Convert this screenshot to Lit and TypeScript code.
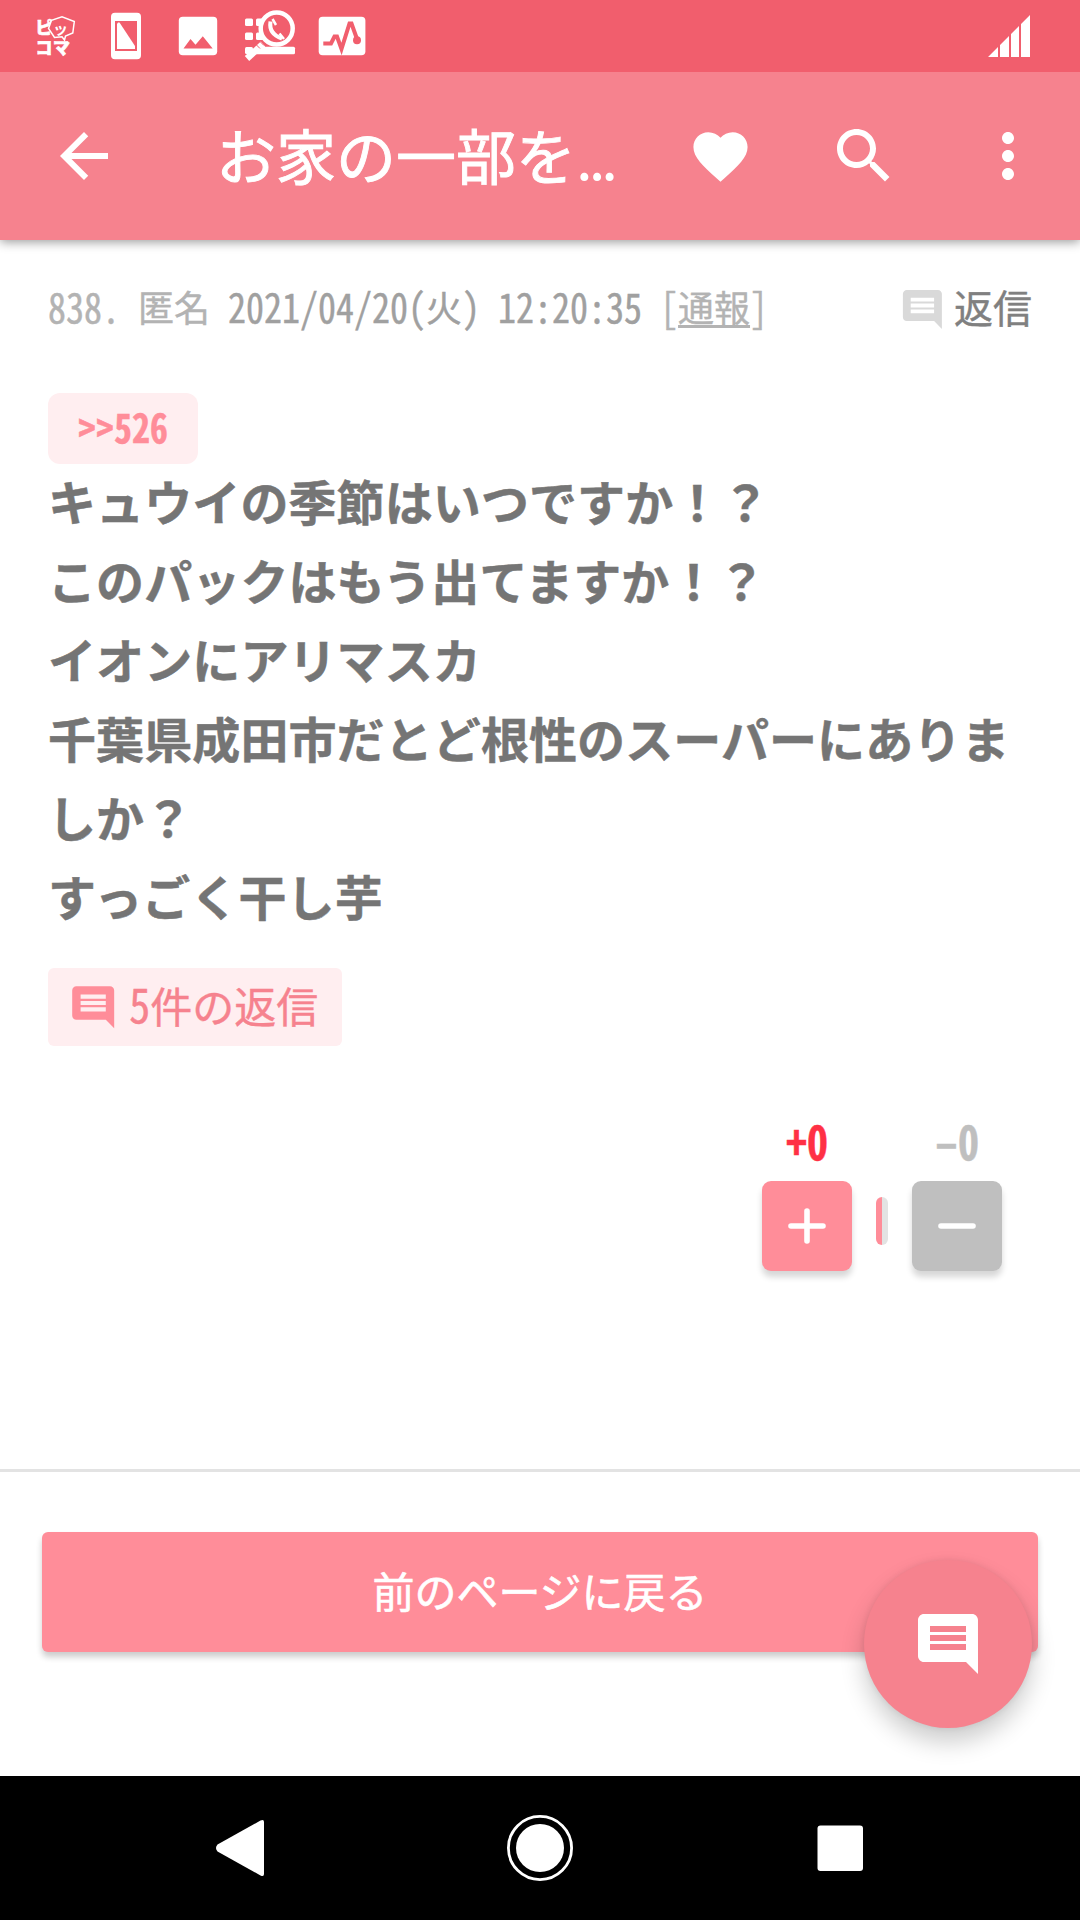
import { LitElement, html, css, svg } from "lit";
import { customElement } from "lit/decorators.js";

const commentPath =
  "M21.99 4c0-1.1-.89-2-1.99-2H4c-1.1 0-2 .9-2 2v12c0 1.1.9 2 2 2h14l4 4-.01-18zM18 14H6v-2h12v2zm0-3H6V9h12v2zm0-3H6V6h12v2z";
const icon = (path: string, cls: string) =>
  html`<svg class="icon ${cls}" viewBox="0 0 24 24"><path d=${path}></path></svg>`;

const statusIcons = [
  svg`<g font-family="Noto Sans CJK JP" font-weight="900" fill="#fff" stroke="#fff" stroke-width=".6">
      <text x="35.500" y="34" font-size="17">ピ</text>
      <text x="35.500" y="53.500" font-size="17">コ</text>
      <text x="53" y="53.500" font-size="17">マ</text>
    </g>
    <path d="M48.5 28.5 51.5 20.3 62 16.7 74.3 21.5 72.8 33 65.5 36 64.5 40 62 36.8 54.5 37.5z" fill="#f15e6d" stroke="#fff" stroke-width="1.5"/>
    <text x="53" y="33.500" font-size="15" font-weight="700" font-family="Noto Sans CJK JP" fill="#fff">ッ</text>`,
  svg`<path fill="#fff" fill-rule="evenodd" d="M115 12.7h22a4 4 0 0 1 4 4v38.600a4 4 0 0 1-4 4h-22a4 4 0 0 1-4-4v-38.600a4 4 0 0 1 4-4zM115 21v30h22V21z"/>
    <path fill="#fff" d="M117 49V24l1-1.500h1.500L135 46v3z"/>`,
  svg`<rect x="178.800" y="16.800" width="38.400" height="38.400" rx="4" fill="#fff"/>
    <path fill="#f15e6d" d="M183.500 48.500 190.500 39 195.500 44.800 202.800 36.300 212.700 48.500z"/>`,
  svg`<g fill="#fff"><rect x="245" y="18.500" width="8" height="7.500" rx="1.500"/><rect x="245" y="32.500" width="8" height="7.500" rx="1.500"/><rect x="245" y="47" width="8" height="7" rx="1.500"/>
      <rect x="256" y="18.500" width="10" height="7.500" rx="1.500"/><rect x="256" y="32.500" width="10" height="7.500" rx="1.500"/><rect x="255" y="46.800" width="40" height="7.400" rx="1.500"/></g>
    <circle cx="276.700" cy="28.500" r="16" fill="#f15e6d" stroke="#fff" stroke-width="4.500"/>
    <path d="M263 44 247 58.500" stroke="#fff" stroke-width="6.500"/>
    <path d="M256 44.500l4 4M260 41.500l4 4" stroke="#f15e6d" stroke-width="1"/>
    <path d="M270.500 21.500Q268.500 34 282 38.500" fill="none" stroke="#fff" stroke-width="4"/>
    <path d="M272.500 19 276 25M279.500 33.500 284 39" stroke="#fff" stroke-width="2.500"/>`,
  svg`<rect x="318.700" y="16.800" width="46.700" height="38.400" rx="4" fill="#fff"/>
    <path d="M323.300 43.500H331L334.500 36.500H337L341.500 49 349.500 23.500H351.500L357 39" fill="none" stroke="#f15e6d" stroke-width="4"/>
    <circle cx="357" cy="40.300" r="4" fill="#f15e6d"/>`,
];

@customElement("app-root")
export class AppRoot extends LitElement {
  static styles = css`
    :host {
      display: flex;
      flex-direction: column;
      position: relative;
      width: 1080px;
      height: 1920px;
      overflow: hidden;
      background: #fff;
      color: #757575;
      font-family: "Noto Sans CJK JP", sans-serif;
      -webkit-text-stroke: 0.4px currentColor;
    }
    * {
      box-sizing: border-box;
    }
    .icon {
      display: block;
      flex: none;
      fill: currentColor;
    }
    .n {
      display: inline-block;
      font-feature-settings: "hwid";
      line-height: 1;
      white-space: pre;
      transform: scaleY(1.12);
      transform-origin: 50% 86%;
    }
    .status {
      flex: none;
      display: flex;
      align-items: center;
      position: relative;
      z-index: 1;
      height: 72px;
      padding: 0 18px;
      background: #f15e6d;
      -webkit-text-stroke: 0;
    }
    .cell {
      width: 72px;
      height: 72px;
    }
    .signal {
      width: 72px;
      height: 72px;
      margin-left: auto;
    }
    .bar {
      flex: none;
      display: flex;
      align-items: center;
      height: 168px;
      padding-left: 48px;
      background: #f6828e;
      color: #fff;
      box-shadow: 0 2px 10px rgba(0, 0, 0, 0.4);
    }
    .i72 {
      width: 72px;
      height: 72px;
    }
    .heart {
      width: 65px;
      height: 65px;
      margin: 0 3.500px;
    }
    .title {
      width: 468px;
      height: 90px;
      margin-left: 96px;
      font-size: 60px;
      line-height: 86px;
      white-space: nowrap;
      -webkit-text-stroke: 0.9px #fff;
    }
    .dots {
      letter-spacing: -4px;
      -webkit-text-stroke: 0;
    }
    .gap {
      margin-left: 72px;
    }
    .post {
      flex: none;
      display: flex;
      flex-direction: column;
      align-items: flex-start;
      height: 1232px;
      padding: 44px 48px 0;
      border-bottom: 3px solid #e3e3e3;
    }
    .meta {
      display: flex;
      align-items: center;
      width: 100%;
      height: 48px;
      font-size: 36px;
      line-height: 44px;
      color: #b3b3b3;
      white-space: pre;
    }
    .meta > span {
      height: 48px;
    }
    .meta > .n {
      line-height: 44px;
      transform-origin: 50% 70%;
    }
    .date {
      color: #a0a0a0;
    }
    .date .n {
      transform-origin: 50% 95%;
      position: relative;
      top: 1px;
    }
    .report {
      text-decoration: underline;
      text-decoration-thickness: 3px;
      text-underline-offset: 3px;
    }
    .reply {
      display: flex;
      align-items: center;
      margin-left: auto;
      font-size: 39px;
      color: #808080;
    }
    .reply b {
      height: 48px;
      font-weight: 400;
    }
    .i47 {
      width: 46.800px;
      height: 46.800px;
      color: #d9d9d9;
      margin: 2px 8px 0 0;
    }
    .chip {
      height: 71px;
      width: 150px;
      margin-top: 61px;
      border-radius: 12px;
      background: #ffeef0;
      color: #ff8d99;
      font-size: 36px;
      line-height: 69px;
      font-weight: 700;
      text-align: center;
    }
    .body {
      margin-top: -3px;
      font-size: 48px;
      line-height: 79px;
      font-weight: 700;
      white-space: nowrap;
      letter-spacing: 0.1px;
      -webkit-text-stroke: 0.5px currentColor;
    }
    .count {
      display: flex;
      align-items: center;
      width: 294px;
      height: 78px;
      margin-top: 33px;
      padding-left: 19.800px;
      border-radius: 6px;
      background: #ffeef0;
      color: #f6828e;
      font-size: 42px;
      line-height: 74px;
      white-space: nowrap;
    }
    .count > span {
      height: 78px;
    }
    .i50 {
      width: 50.400px;
      height: 50.400px;
      color: #ff8d99;
      margin-right: 11px;
    }
    .votes {
      display: flex;
      align-self: flex-end;
      align-items: flex-end;
      gap: 24px;
      margin: 65px 30px 0 0;
    }
    .vote {
      display: flex;
      flex-direction: column;
      align-items: center;
      width: 90px;
      font-size: 42px;
      font-weight: 700;
      line-height: 60px;
    }
    .vote .n {
      height: 70px;
      line-height: 60px;
      transform: scaleY(1.13);
      transform-origin: 50% 62%;
    }
    .up {
      color: #ff3045;
    }
    .down {
      color: #bfbfbf;
    }
    .btn {
      display: block;
      width: 90px;
      height: 90px;
      border-radius: 9px;
      box-shadow: 0 6px 6px rgba(0, 0, 0, 0.16);
      stroke: #fff;
      stroke-width: 5.600;
      stroke-linecap: round;
    }
    .up .btn {
      background: #ff8d99;
    }
    .down .btn {
      background: #bfbfbf;
    }
    .ratio {
      width: 12px;
      height: 48px;
      margin-bottom: 26px;
      border-radius: 6px;
      background: linear-gradient(90deg, #ff8d99 50%, #e3e3e3 50%);
    }
    .foot {
      flex: 1;
      padding: 60px 42px 0;
    }
    .back {
      height: 120px;
      border-radius: 6px;
      background: #ff8d99;
      color: #fff;
      font-size: 42px;
      line-height: 115px;
      text-align: center;
      box-shadow: 0 5px 6px rgba(0, 0, 0, 0.2);
      -webkit-text-stroke: 0.6px #fff;
    }
    .fab {
      position: absolute;
      right: 48px;
      bottom: 192px;
      display: flex;
      align-items: center;
      justify-content: center;
      width: 168px;
      height: 168px;
      border-radius: 50%;
      background: #f6828e;
      color: #fff;
      box-shadow: 0 14px 24px rgba(0, 0, 0, 0.2), 0 0 6px rgba(0, 0, 0, 0.08);
    }
    .nav {
      flex: none;
      display: flex;
      justify-content: center;
      gap: 156px;
      height: 144px;
      background: #000;
      fill: #fff;
    }
    .nav svg {
      width: 144px;
      height: 144px;
    }
  `;

  render() {
    return html`
      <div class="status">
        ${statusIcons.map(
          (s, i) => html`<svg class="cell" viewBox="${18 + i * 72} 0 72 72">${s}</svg>`
        )}
        <svg class="signal" viewBox="990 0 72 72" overflow="visible" fill="#fff">
          <path d="M988 57l10-10v10zM1000 57V45l9-9v21zM1011 57V34l8-8v31zM1021 57V24l9-9v42z"></path>
        </svg>
      </div>
      <div class="bar">
        ${icon("M20 11H7.830l5.590-5.590L12 4l-8 8 8 8 1.410-1.410L7.830 13H20v-2z", "i72")}
        <div class="title">お家の一部を<span class="dots">...</span></div>
        ${icon(
          "M12 21.350l-1.450-1.320C5.400 15.360 2 12.280 2 8.500 2 5.420 4.420 3 7.500 3c1.740 0 3.410.81 4.500 2.090C13.090 3.810 14.760 3 16.500 3 19.580 3 22 5.420 22 8.500c0 3.780-3.400 6.860-8.550 11.540L12 21.350z",
          "heart"
        )}
        ${icon(
          "M15.500 14h-.79l-.28-.27C15.410 12.590 16 11.110 16 9.500 16 5.910 13.090 3 9.500 3S3 5.910 3 9.500 5.910 16 9.500 16c1.610 0 3.090-.59 4.230-1.570l.27.28v.79l5 4.990L20.490 19l-4.990-5zm-6 0C7.010 14 5 11.990 5 9.500S7.010 5 9.500 5 14 7.010 14 9.500 11.990 14 9.500 14z",
          "i72 gap"
        )}
        ${icon(
          "M12 8c1.100 0 2-.9 2-2s-.9-2-2-2-2 .9-2 2 .9 2 2 2zm0 2c-1.100 0-2 .9-2 2s.9 2 2 2 2-.9 2-2-.9-2-2-2zm0 6c-1.100 0-2 .9-2 2s.9 2 2 2 2-.9 2-2-.9-2-2-2z",
          "i72 gap"
        )}
      </div>
      <div class="post">
        <div class="meta"><span class="n">838. </span><span>匿名</span><span class="date"><span class="n"> 2021/04/20(</span>火<span class="n">) 12:20:35 </span></span><span class="n">[</span><span class="report">通報</span><span class="n">]</span><span class="reply">${icon(commentPath, "i47")}<b>返信</b></span></div>
        <div class="chip"><span class="n">&gt;&gt;526</span></div>
        <div class="body">
          キュウイの季節はいつですか！？<br />このパックはもう出てますか！？<br />イオンにアリマスカ<br />千葉県成田市だとど根性のスーパーにありま<br />しか？<br />すっごく干し芋
        </div>
        <div class="count">${icon(commentPath, "i50")}<span><span class="n">5</span>件の返信</span></div>
        <div class="votes">
          <div class="vote up">
            <span class="n">+0</span>
            <svg class="btn" viewBox="0 0 90 90"><path d="M29 45H61M45 30V60"></path></svg>
          </div>
          <div class="ratio"></div>
          <div class="vote down">
            <span class="n">–0</span>
            <svg class="btn" viewBox="0 0 90 90"><path d="M29 45H61"></path></svg>
          </div>
        </div>
      </div>
      <div class="foot"><div class="back">前のページに戻る</div></div>
      <div class="nav">
        <svg viewBox="168 1776 144 144">
          <path d="M217.500 1844.500 260.500 1820.500Q264 1818.800 264 1822V1874Q264 1877.200 260.500 1875.500L217.500 1851.500Q214.500 1848 217.500 1844.500z"></path>
        </svg>
        <svg viewBox="468 1776 144 144">
          <circle cx="540" cy="1848" r="31.600" fill="none" stroke="#fff" stroke-width="2.800"></circle>
          <circle cx="540" cy="1848" r="24"></circle>
        </svg>
        <svg viewBox="768 1776 144 144">
          <rect x="817.500" y="1825.500" width="45.500" height="45.500" rx="3"></rect>
        </svg>
      </div>
      <div class="fab">${icon(commentPath, "i72")}</div>
    `;
  }
}
